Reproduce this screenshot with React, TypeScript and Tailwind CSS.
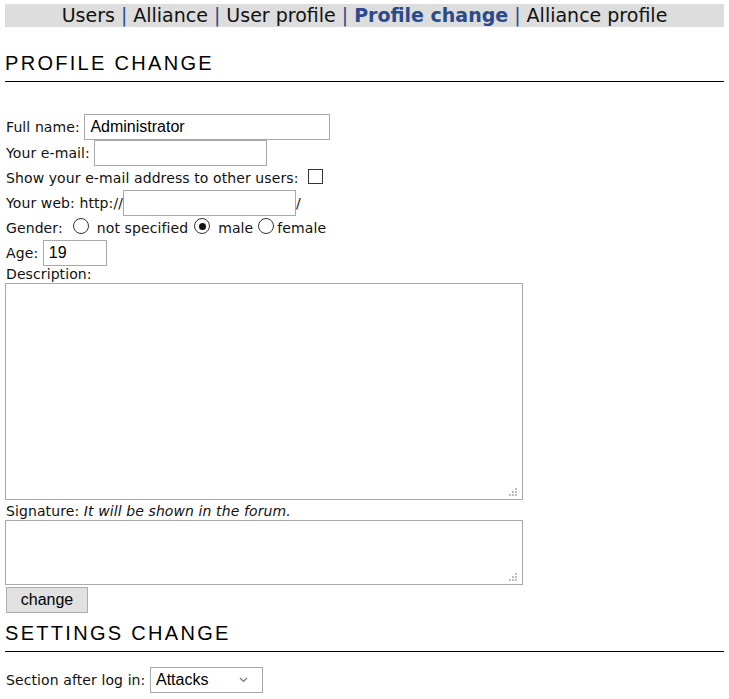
import { useState } from 'react';

const NavLink = ({ label, active }: { label: string; active?: boolean }) => (
  <span className={active ? 'font-bold text-[#2b4a8b]' : 'text-[#111]'}>{label}</span>
);

const Sep = () => <span className="mx-[6px] text-[#2b4a8b]">|</span>;

const Radio = ({ checked, className }: { checked?: boolean; className?: string }) => (
  <span
    className={`mb-[4px] inline-flex h-[16px] w-[16px] items-center justify-center rounded-full border border-[#333] bg-white ${className ?? ''}`}
  >
    {checked && <span className="h-[7px] w-[7px] rounded-full bg-[#111]" />}
  </span>
);

const Input = ({ value, className }: { value?: string; className: string }) => (
  <input
    defaultValue={value}
    className={`border border-[#a9a9a9] bg-white px-[5px] font-['Liberation_Sans',Arial,sans-serif] text-[16px] tracking-normal text-black outline-none ${className}`}
  />
);

const Heading = ({ title }: { title: string }) => (
  <div className="border-b border-black pb-[6px]">
    <h2 className="font-['Liberation_Sans',Arial,sans-serif] text-[20px] leading-[24px] uppercase tracking-[2.3px] text-black">
      {title}
    </h2>
  </div>
);

// windows-style resize grip
const Grip = () => (
  <svg className="absolute bottom-[4px] right-[6px]" width="8" height="8" viewBox="0 0 8 8">
    <g fill="#bdbdbd">
      <rect x="6" y="0" width="2" height="2" />
      <rect x="3" y="3" width="2" height="2" />
      <rect x="6" y="3" width="2" height="2" />
      <rect x="0" y="6" width="2" height="2" />
      <rect x="3" y="6" width="2" height="2" />
      <rect x="6" y="6" width="2" height="2" />
    </g>
  </svg>
);

const Area = ({ className }: { className: string }) => (
  <div className={`relative w-[518px] ${className}`}>
    <textarea className="block h-full w-full resize-none border border-[#a9a9a9] bg-white outline-none" />
    <Grip />
  </div>
);

export default function App() {
  const [page] = useState('Profile change');
  const links = ['Users', 'Alliance', 'User profile', 'Profile change', 'Alliance profile'];

  return (
    <div className="min-h-[699px] bg-white px-[5px] pt-[4px] font-['DejaVu_Sans',Verdana,sans-serif] text-[14px] tracking-[0.1px] text-[#111]">
      {/* top menu */}
      <div className="flex h-[23px] items-center justify-center bg-[#dddddd] font-['DejaVu_Sans',Tahoma,sans-serif] text-[19px] tracking-normal">
        {links.map((l, i) => (
          <span key={l} className="flex items-center">
            {i > 0 && <Sep />}
            <NavLink label={l} active={l === page} />
          </span>
        ))}
      </div>

      <div className="mt-[24px]">
        <Heading title="Profile change" />
      </div>

      <form className="mt-[32px]" onSubmit={(e) => e.preventDefault()}>
        <div className="flex h-[26px] items-center">
          <span className="pl-[1px]">Full name:&nbsp;</span>
          <Input value="Administrator" className="h-[26px] w-[246px]" />
        </div>
        <div className="flex h-[26px] items-center">
          <span className="pl-[1px]">Your e-mail:&nbsp;</span>
          <Input className="h-[26px] w-[173px]" />
        </div>
        <div className="flex h-[24px] items-center">
          <span className="pl-[1px]">Show your e-mail address to other users:&nbsp;</span>
          <span className="mb-[4px] ml-[5px] inline-block h-[15px] w-[15px] border border-[#333] bg-white" />
        </div>
        <div className="flex h-[26px] items-center">
          <span className="pl-[1px]">Your web: http://</span>
          <Input className="h-[26px] w-[173px]" />
          <span>/</span>
        </div>
        <div className="flex h-[24px] items-center">
          <span className="pl-[1px]">Gender:</span>
          <Radio className="ml-[10px]" />
          <span className="ml-[8px]">not specified</span>
          <Radio checked className="ml-[6px]" />
          <span className="ml-[8px]">male</span>
          <Radio className="ml-[5px]" />
          <span className="ml-[3px]">female</span>
        </div>
        <div className="flex h-[26px] items-center">
          <span className="pl-[1px]">Age:&nbsp;</span>
          <Input value="19" className="h-[26px] w-[64px]" />
        </div>
        <div className="h-[16px] pl-[1px] leading-[16px]">Description:</div>
        <Area className="mt-[1px] h-[217px]" />
        <div className="mt-[2px] h-[18px] pl-[1px] leading-[18px]">
          Signature: <i>It will be shown in the forum.</i>
        </div>
        <Area className="h-[65px]" />
        <button
          type="submit"
          className="ml-[1px] mt-[2px] h-[26px] w-[82px] border border-[#adadad] bg-[#e1e1e1] font-['Liberation_Sans',Arial,sans-serif] text-[16px] tracking-normal text-black"
        >
          change
        </button>
      </form>

      <div className="mt-[8px]">
        <Heading title="Settings change" />
      </div>

      <div className="mt-[15px] flex h-[26px] items-center">
        <span className="pl-[1px]">Section after log in:&nbsp;</span>
        <select
          defaultValue="Attacks"
          className="h-[26px] w-[113px] appearance-none border border-[#a9a9a9] bg-white pl-[5px] font-['Liberation_Sans',Arial,sans-serif] text-[16px] tracking-normal text-black outline-none"
          style={{
            backgroundImage:
              "url(\"data:image/svg+xml,%3Csvg xmlns='http://www.w3.org/2000/svg' width='9' height='6'%3E%3Cpath d='M1 1l3.5 3.5 3.5-3.5' fill='none' stroke='%23777' stroke-width='1.2'/%3E%3C/svg%3E\")",
            backgroundRepeat: 'no-repeat',
            backgroundPosition: 'right 14px center',
          }}
        >
          <option>Attacks</option>
          <option>Overview</option>
        </select>
      </div>
    </div>
  );
}
